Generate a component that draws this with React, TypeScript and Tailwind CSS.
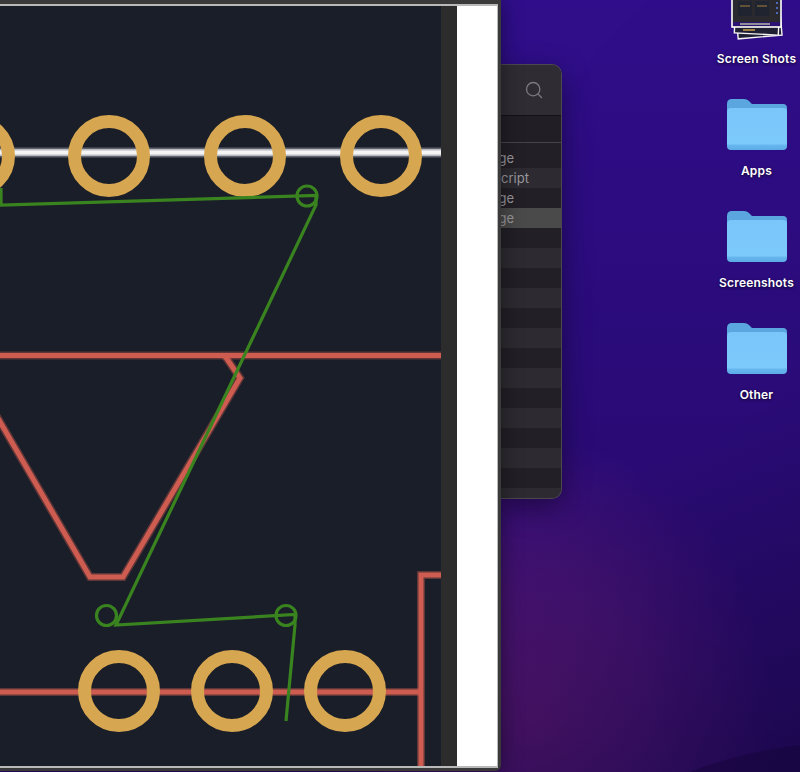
import React from 'react';
import { Search } from 'lucide-react';

const topPads = [-26, 109, 245, 381];
const bottomPads = [119, 232, 345];

const traces = [
    'M-10 355.5H441',
    'M225 356L240 378L123 577H90L-8 408',
    'M0 692H421',
    'M441 575H421V767',
];

const Board: React.FC = () => (
    <svg className="block h-full w-full" viewBox="0 6 441 760" preserveAspectRatio="none">
        <path d="M0 152.5H441" stroke="#5f626e" strokeWidth={10} fill="none" />
        <path d="M0 152.5H441" stroke="#b9bac0" strokeWidth={7} fill="none" />
        <path d="M0 152.5H441" stroke="#f4f4f4" strokeWidth={4} fill="none" />
        {traces.map((d) => (
            <g key={d} fill="none">
                <path d={d} stroke="#c9594e" strokeOpacity={0.4} strokeWidth={8} />
                <path d={d} stroke="#cf5c50" strokeWidth={5} />
            </g>
        ))}
        {topPads.map((x) => (
            <circle key={x} cx={x} cy={156} r={34.5} fill="none" stroke="#d6a651" strokeWidth={13} />
        ))}
        {bottomPads.map((x) => (
            <circle key={x} cx={x} cy={691} r={34.5} fill="none" stroke="#d6a651" strokeWidth={13} />
        ))}
        <g fill="none" stroke="#3a8420" strokeWidth={3.2}>
            <path d="M1 188V205L316 195.5V205L116 625L295 614.5V625L286 721" />
            <circle cx={307} cy={196} r={10} />
            <circle cx={106.5} cy={615.5} r={10} />
            <circle cx={286} cy={615.5} r={10} />
        </g>
    </svg>
);

const rows = Array.from({ length: 18 }, (_, i) => i);
const rowText: Record<number, { label: string; pad: string }> = {
    0: { label: 'PNG image', pad: 'pr-[47px]' },
    1: { label: 'JavaScript', pad: 'pr-[32px]' },
    2: { label: 'PNG image', pad: 'pr-[47px]' },
    3: { label: 'PNG image', pad: 'pr-[47px]' },
};

const FinderPanel: React.FC = () => (
    <div className="relative mt-[64px] flex h-[435px] w-[61px] flex-col overflow-hidden rounded-r-[10px] border border-l-0 border-[#4b494e] bg-[#2c2a30] font-['Inter',sans-serif] shadow-[0_8px_28px_rgba(0,0,0,0.4)]">
        <div className="flex h-[51px] shrink-0 items-center justify-end border-b border-[#121014] bg-[#302c34] pr-[17px]">
            <Search size={20} strokeWidth={1.6} className="text-[#7b797e]" />
        </div>
        <div className="h-[27px] shrink-0 border-b border-[#47444b] bg-[#221e26]" />
        <div className="h-[5px] shrink-0 bg-[#231f27]" />
        {rows.map((i) => {
            const text = rowText[i];
            const bg = i === 3 ? 'bg-[#4a4a4a]' : i % 2 === 0 ? 'bg-[#231f27]' : 'bg-[#2d2b31]';
            return (
                <div key={i} className={`flex h-[20px] shrink-0 items-center justify-end overflow-hidden pt-[2px] text-[13px] whitespace-nowrap text-[#9a989d] ${bg} ${text ? text.pad : ''}`}>
                    {text ? <span className="shrink-0">{text.label}</span> : null}
                </div>
            );
        })}
    </div>
);

const Folder: React.FC<{ id: string }> = ({ id }) => (
    <svg width={60} height={52} viewBox="0 0 60 52" className="ml-[1px] block">
        <defs>
            <linearGradient id={id} x1="0" y1="0" x2="0" y2="1">
                <stop offset="0" stopColor="#7ac6fa" />
                <stop offset="0.86" stopColor="#7cc9fc" />
                <stop offset="0.88" stopColor="#66b6ee" />
                <stop offset="1" stopColor="#5cabe6" />
            </linearGradient>
        </defs>
        <path d="M0 5Q0 0 5 0H17Q20 0 22 2L25 5H56Q60 5 60 9V20H0Z" fill="#5ba6df" />
        <path d="M0 13Q0 9 4 9H56Q60 9 60 13V47Q60 51 56 51H4Q0 51 0 47Z" fill={`url(#${id})`} />
    </svg>
);

const ScreenShotsStack: React.FC = () => (
    <svg width={56} height={41} viewBox="0 0 56 41" className="block">
        <rect x={8} y={11} width={44} height={26} fill="#1e1f33" stroke="#f2f2f2" strokeWidth={1.4} transform="rotate(-5 30 24)" />
        <rect x={6} y={8} width={44} height={26} fill="#1e1f33" stroke="#f2f2f2" strokeWidth={1.4} transform="rotate(3 28 20)" />
        <path d="M14 30h12" stroke="#c9a24e" strokeWidth={1.5} />
        <rect x={3} y={-6} width={49} height={33} fill="#2a2a2e" stroke="#ffffff" strokeWidth={1.6} />
        <rect x={9} y={1} width={14} height={15} fill="#1f2430" />
        <rect x={26} y={1} width={14} height={15} fill="#1f2430" />
        <path d="M11 6h10M28 6h10" stroke="#a5813f" strokeWidth={1} />
        <rect x={4} y={22} width={47} height={4} fill="#2c1272" />
        <rect x={11} y={23} width={30} height={2} fill="#8f8f98" />
        <circle cx={48} cy={3} r={1} fill="#5a7cf0" />
        <circle cx={48} cy={8} r={1} fill="#5a7cf0" />
        <circle cx={48} cy={13} r={1} fill="#5a7cf0" />
    </svg>
);

const labelClass = "text-center font-['Inter',sans-serif] text-[12px] leading-[16px] font-semibold tracking-[0.2px] whitespace-nowrap text-white [text-shadow:0_1px_3px_rgba(0,0,0,0.7)]";

const DesktopIcons: React.FC = () => (
    <div className="relative ml-auto flex w-[86px] flex-col items-center pr-[1px]">
        <div className="flex h-[41px] items-start justify-center overflow-hidden">
            <ScreenShotsStack />
        </div>
        <div className={`mt-[10px] ${labelClass}`}>Screen Shots</div>
        {['Apps', 'Screenshots', 'Other'].map((name, i) => (
            <div key={name} className="mt-[32px] flex flex-col items-center">
                <Folder id={`folder-${i}`} />
                <div className={`mt-[12px] ${labelClass}`}>{name}</div>
            </div>
        ))}
    </div>
);

export default function App() {
    return (
        <div className="relative flex h-[772px] w-[800px] overflow-hidden bg-[#2a0b78] bg-[radial-gradient(ellipse_240px_280px_at_535px_720px,#56166f_0%,#471372_45%,rgba(58,15,115,0)_100%),linear-gradient(180deg,#2f0d8a_0%,#2a0b78_50%,#290a68_100%)]">
            {/* wallpaper bands */}
            <svg className="absolute inset-0" width={800} height={772} viewBox="0 0 800 772">
                <defs>
                    <linearGradient id="band" x1="0.8" y1="0.6" x2="1" y2="1">
                        <stop offset="0" stopColor="#12053a" stopOpacity={0} />
                        <stop offset="1" stopColor="#12053a" stopOpacity={0.55} />
                    </linearGradient>
                </defs>
                <path d="M650 0C600 40 550 110 520 190L500 300V0Z" fill="#3a1296" fillOpacity={0.14} />
                <rect width={800} height={772} fill="url(#band)" />
                <path d="M800 745C760 750 720 760 690 772H800Z" fill="#10042e" fillOpacity={0.35} />
            </svg>
            <div className="relative z-10 h-[771px] w-[501px] shrink-0 rounded-br-[6px] bg-[#3a3a3a] pt-[4px] pr-[3px] pb-[3px] shadow-[0_0_22px_rgba(0,0,0,0.45)]">
                <div className="flex h-full border-y-2 border-r border-[#b9b9b9] bg-white">
                    <div className="h-full w-[441px] shrink-0 bg-[#1a1e29]">
                        <Board />
                    </div>
                    <div className="h-full w-[16px] shrink-0 bg-[#2b2c2b]" />
                </div>
            </div>
            <FinderPanel />
            <DesktopIcons />
        </div>
    );
}
